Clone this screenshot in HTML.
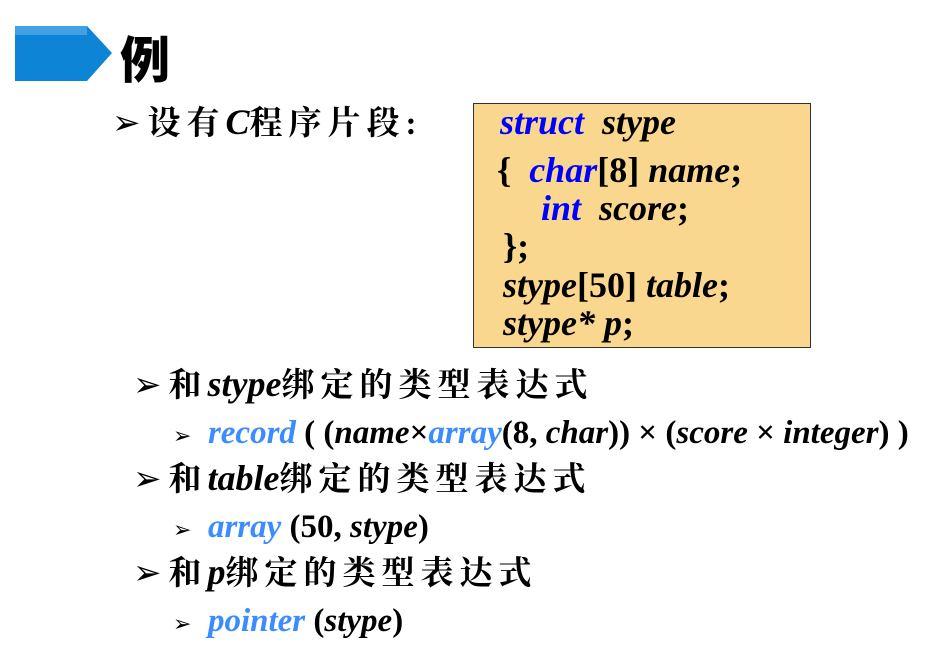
<!DOCTYPE html>
<html><head><meta charset="utf-8"><style>
body{margin:0;width:929px;height:652px;background:#fff;position:relative;overflow:hidden;font-family:"Liberation Serif","Noto Serif CJK SC",serif;}
.a{position:absolute;white-space:nowrap;font-weight:bold;color:#000;}
.c{letter-spacing:6px;font-weight:bold;font-size:33px}
i{font-style:italic}
.b{color:#0000ff}.lb{color:#3b8cff}
.box{position:absolute;left:473px;top:103px;width:336px;height:243px;background:#fad78e;border:1.5px solid #333;}
.ar{font-size:34px;font-family:"DejaVu Sans",sans-serif;margin-right:7px}
</style></head><body>
<svg style="position:absolute;left:0;top:0" width="120" height="90">
<polygon points="15,26 87,26 112,53 87,81 15,81" fill="#0e84d6"/>
<rect x="15" y="26" width="72" height="9" fill="#5aaee8" opacity=".7"/>
</svg>
<div class="a" style="left:120px;top:26px;font-size:50px;font-family:'Noto Sans CJK SC',sans-serif;font-weight:900;line-height:62px">例</div>
<div class="a" style="left:112px;top:100px;font-size:32px;line-height:44px"><span class="ar">➢</span><span class="c">设有</span><i style="font-size:36px">C</i><span class="c">程序片段:</span></div>
<div class="box"></div>
<div class="a" style="left:500px;top:103px;font-size:36px;line-height:38px"><i class="b">struct</i> &nbsp;<i>stype</i></div>
<div class="a" style="left:497px;top:151px;font-size:36px;line-height:38px">{ &nbsp;<i class="b">char</i>[8] <i>name</i>;</div>
<div class="a" style="left:541px;top:189px;font-size:36px;line-height:38px"><i class="b">int</i> &nbsp;<i>score</i>;</div>
<div class="a" style="left:503px;top:227px;font-size:36px;line-height:38px">};</div>
<div class="a" style="left:503px;top:266px;font-size:36px;line-height:38px"><i>stype</i>[50] <i>table</i>;</div>
<div class="a" style="left:503px;top:304px;font-size:36px;line-height:38px"><i>stype* p</i>;</div>
<div class="a" style="left:133px;top:362px;font-size:32px;line-height:44px"><span class="ar">➢</span><span class="c">和</span><i style="font-size:36px">stype</i><span class="c">绑定的类型表达式</span></div>
<div class="a" style="left:173px;top:413px;font-size:33px;line-height:40px"><span class="ar" style="font-size:22px;margin:0">➢</span> &nbsp;<i class="lb">record</i> ( (<i>name</i>×<i class="lb">array</i>(8, <i>char</i>)) × (<i>score</i> × <i>integer</i>) )</div>
<div class="a" style="left:133px;top:456px;font-size:32px;line-height:44px"><span class="ar">➢</span><span class="c">和</span><i style="font-size:36px">table</i><span class="c">绑定的类型表达式</span></div>
<div class="a" style="left:173px;top:507px;font-size:33px;line-height:40px"><span class="ar" style="font-size:22px;margin:0">➢</span> &nbsp;<i class="lb">array</i> (50, <i>stype</i>)</div>
<div class="a" style="left:133px;top:550px;font-size:32px;line-height:44px"><span class="ar">➢</span><span class="c">和</span><i style="font-size:36px">p</i><span class="c">绑定的类型表达式</span></div>
<div class="a" style="left:173px;top:601px;font-size:33px;line-height:40px"><span class="ar" style="font-size:22px;margin:0">➢</span> &nbsp;<i class="lb">pointer</i> (<i>stype</i>)</div>
</body></html>
